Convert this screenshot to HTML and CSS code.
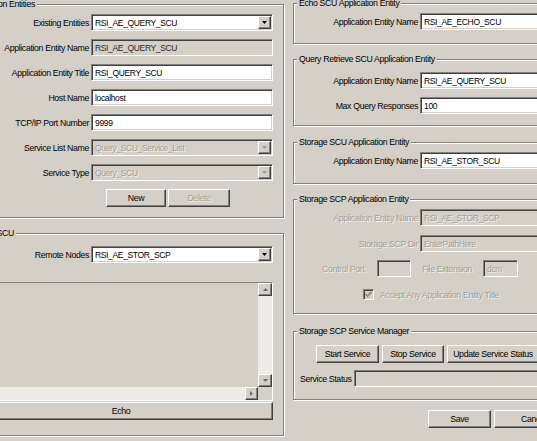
FILE: index.html
```html
<!DOCTYPE html>
<html>
<head>
<meta charset="utf-8">
<title>DICOM Settings</title>
<link rel="stylesheet" href="styles.css">
</head>
<body>
<div class="dialog">
  <div class="col-left">
    <fieldset class="gb gb-entities">
      <legend>Application Entities</legend>
      <div class="form form-left">
        <span class="lbl">Existing Entities</span>
        <div class="field combo"><span class="val">RSI_AE_QUERY_SCU</span><span class="drop raised"><svg width="5" height="3" viewBox="0 0 5 3"><polygon points="0,0 5,0 2.5,3" fill="#000"/></svg></span></div>
        <span class="lbl">Application Entity Name</span>
        <div class="field readonly"><span class="val">RSI_AE_QUERY_SCU</span></div>
        <span class="lbl">Application Entity Title</span>
        <div class="field"><span class="val">RSI_QUERY_SCU</span></div>
        <span class="lbl">Host Name</span>
        <div class="field"><span class="val">localhost</span></div>
        <span class="lbl">TCP/IP Port Number</span>
        <div class="field"><span class="val">9999</span></div>
        <span class="lbl">Service List Name</span>
        <div class="field combo disabled"><span class="val">Query_SCU_Service_List</span><span class="drop raised"><svg width="5" height="3" viewBox="0 0 5 3"><polygon points="0,0 5,0 2.5,3" fill="#a09d97"/></svg></span></div>
        <span class="lbl">Service Type</span>
        <div class="field combo disabled"><span class="val">Query_SCU</span><span class="drop raised"><svg width="5" height="3" viewBox="0 0 5 3"><polygon points="0,0 5,0 2.5,3" fill="#a09d97"/></svg></span></div>
      </div>
      <div class="btnrow btnrow-entities">
        <button class="btn raised btn-new">New</button>
        <button class="btn raised btn-delete dis-text">Delete</button>
      </div>
    </fieldset>

    <fieldset class="gb gb-echo">
      <legend>Echo SCU</legend>
      <div class="form form-left">
        <span class="lbl">Remote Nodes</span>
        <div class="field combo"><span class="val">RSI_AE_STOR_SCP</span><span class="drop raised"><svg width="5" height="3" viewBox="0 0 5 3"><polygon points="0,0 5,0 2.5,3" fill="#000"/></svg></span></div>
      </div>
      <div class="listbox">
        <div class="list-area"></div>
        <div class="vscroll">
          <span class="sbtn raised"><svg width="5" height="3" viewBox="0 0 5 3"><polygon points="0,3 5,3 2.5,0" fill="#6a6864"/></svg></span>
          <span class="track"></span>
          <span class="sbtn raised"><svg width="5" height="3" viewBox="0 0 5 3"><polygon points="0,0 5,0 2.5,3" fill="#6a6864"/></svg></span>
        </div>
        <div class="hscroll">
          <span class="sbtn raised"><svg width="3" height="5" viewBox="0 0 3 5"><polygon points="3,0 3,5 0,2.5" fill="#6a6864"/></svg></span>
          <span class="track"></span>
          <span class="sbtn raised"><svg width="3" height="5" viewBox="0 0 3 5"><polygon points="0,0 0,5 3,2.5" fill="#6a6864"/></svg></span>
        </div>
        <div class="corner"></div>
      </div>
      <button class="btn raised btn-echo">Echo</button>
    </fieldset>
  </div>

  <div class="col-right">
    <fieldset class="gb gb-r1">
      <legend>Echo SCU Application Entity</legend>
      <div class="form form-right">
        <span class="lbl">Application Entity Name</span>
        <div class="field"><span class="val">RSI_AE_ECHO_SCU</span></div>
      </div>
    </fieldset>

    <fieldset class="gb gb-r2">
      <legend>Query Retrieve SCU Application Entity</legend>
      <div class="form form-right">
        <span class="lbl">Application Entity Name</span>
        <div class="field"><span class="val">RSI_AE_QUERY_SCU</span></div>
        <span class="lbl">Max Query Responses</span>
        <div class="field"><span class="val">100</span></div>
      </div>
    </fieldset>

    <fieldset class="gb gb-r3">
      <legend>Storage SCU Application Entity</legend>
      <div class="form form-right">
        <span class="lbl">Application Entity Name</span>
        <div class="field"><span class="val">RSI_AE_STOR_SCU</span></div>
      </div>
    </fieldset>

    <fieldset class="gb gb-r4">
      <legend>Storage SCP Application Entity</legend>
      <div class="form form-right form-scp">
        <span class="lbl dis-text">Application Entity Name</span>
        <div class="field disabled"><span class="val">RSI_AE_STOR_SCP</span></div>
        <span class="lbl dis-text">Storage SCP Dir</span>
        <div class="field disabled"><span class="val">EnterPathHere</span></div>
      </div>
      <div class="port-row">
        <span class="lbl dis-text lbl-port">Control Port</span>
        <div class="field disabled f-port"></div>
        <span class="lbl dis-text lbl-ext">File Extension</span>
        <div class="field disabled f-ext"><span class="val">dcm</span></div>
      </div>
      <div class="check-row">
        <span class="checkbox"><svg width="7" height="7" viewBox="0 0 7 7"><polyline points="0.5,3 2.5,5 6.5,1" fill="none" stroke="#8a8782" stroke-width="1.6"/></svg></span>
        <span class="dis-text">Accept Any Application Entity Title</span>
      </div>
    </fieldset>

    <fieldset class="gb gb-r5">
      <legend>Storage SCP Service Manager</legend>
      <div class="btnrow btnrow-svc">
        <button class="btn raised btn-start">Start Service</button>
        <button class="btn raised btn-stop">Stop Service</button>
        <button class="btn raised btn-update">Update Service Status</button>
      </div>
      <div class="status-row">
        <span class="lbl">Service Status</span>
        <div class="field readonly f-status"></div>
      </div>
    </fieldset>

    <div class="btnrow btnrow-main">
      <button class="btn raised btn-save">Save</button>
      <button class="btn raised btn-cancel">Cancel</button>
    </div>
  </div>
</div>
</body>
</html>
```

FILE: styles.css
```css
html, body {
  margin: 0;
  padding: 0;
}
body {
  width: 537px;
  height: 441px;
  overflow: hidden;
  background: #d4d0c8;
  font-family: "Liberation Sans", Arial, sans-serif;
  font-size: 8.75px;
  letter-spacing: -0.35px;
  color: #000;
}
.dialog {
  display: flex;
  align-items: flex-start;
}
.col-left {
  flex: none;
  width: 324px;
  margin-left: -40px;
  margin-top: -1px;
  display: flex;
  flex-direction: column;
}
.col-right {
  flex: none;
  width: 280px;
  margin-left: 9px;
  margin-top: -2px;
  display: flex;
  flex-direction: column;
}

/* group boxes */
.gb {
  margin: 0;
  padding: 0;
  min-width: 0;
  border: 1px solid #808080;
  box-shadow: inset 1px 1px 0 #fff, 1px 1px 0 #fff;
}
.gb legend {
  padding: 0 2px;
  margin-left: 3px;
  height: 10px;
  line-height: 10px;
  background: #d4d0c8;
  white-space: nowrap;
}
.gb-entities { padding: 5px 10px 10px 0; }
.gb-entities legend { margin-left: 5px; }
.gb-echo { margin-top: 10px; padding: 8px 10px 15px 0; }
.gb-echo legend { margin-left: 13px; }

.gb-r1 { padding: 5px 0 13px 0; }
.gb-r2 { margin-top: 10px; padding: 8px 0 11px 0; }
.gb-r3 { margin-top: 11px; padding: 5px 0 14px 0; }
.gb-r4 { margin-top: 10px; padding: 5px 0 12px 0; }
.gb-r5 { margin-top: 12px; padding: 9px 0 12px 0; }

/* forms */
.form {
  display: grid;
  row-gap: 8px;
  column-gap: 2px;
  align-items: center;
}
.form-left { grid-template-columns: 128px 182px; }
.form-right { grid-template-columns: 124px 1fr; padding-right: 10px; }
.form-scp { row-gap: 9px; }
.lbl {
  text-align: right;
  white-space: nowrap;
  line-height: 12px;
}

/* sunken fields */
.field {
  box-sizing: border-box;
  height: 17px;
  border: 1px solid;
  border-color: #808080 #fff #fff #808080;
  box-shadow: inset 1px 1px 0 #404040, inset -1px -1px 0 #d4d0c8;
  background: #fff;
  display: flex;
  align-items: center;
  overflow: hidden;
  white-space: nowrap;
}
.field .val {
  padding-left: 3px;
  font-size: 8.5px;
  line-height: 12px;
}
.field.readonly { background: #d4d0c8; }
.field.readonly .val { color: #2a2a2a; }
.field.disabled { background: #d4d0c8; }
.combo .drop {
  margin-left: auto;
  margin-right: 1px;
  width: 13px;
  height: 13px;
  display: flex;
  align-items: center;
  justify-content: center;
  flex: none;
}

/* raised elements */
.raised {
  box-sizing: border-box;
  border: 1px solid;
  border-color: #fff #404040 #404040 #fff;
  box-shadow: inset -1px -1px 0 #808080;
  background: #d4d0c8;
}
.btn {
  font-family: inherit;
  font-size: 8.75px;
  letter-spacing: -0.35px;
  color: #000;
  height: 18px;
  padding: 0;
  margin: 0;
  line-height: 14px;
  white-space: nowrap;
}
.field.disabled .val,
.dis-text,
.btn.dis-text {
  color: #a29f99;
  text-shadow: 1px 1px 0 #f2f1ee;
}
.btnrow { display: flex; gap: 2px; }
.btnrow-entities { margin-top: 8px; padding-left: 145px; }
.btn-new { width: 60px; }
.btn-delete { width: 62px; }

/* list box */
.listbox {
  margin: 19px 0 0 8px;
  height: 119px;
  box-sizing: border-box;
  border: 1px solid;
  border-color: #808080 #fff #fff #808080;
  box-shadow: inset 1px 1px 0 #404040;
  display: grid;
  grid-template-columns: 1fr 14px;
  grid-template-rows: 1fr 13px;
}
.list-area { background: #d4d0c8; }
.vscroll { display: flex; flex-direction: column; }
.hscroll { display: flex; }
.track { flex: 1; background: #edece8; }
.sbtn {
  flex: none;
  width: 14px;
  height: 13px;
  display: flex;
  align-items: center;
  justify-content: center;
}
.hscroll .sbtn { width: 13px; height: 13px; }
.corner { background: #d4d0c8; }
.btn-echo {
  margin: 1px 0 0 8px;
  width: 304px;
}

/* storage scp rows */
.port-row {
  display: flex;
  align-items: center;
  margin-top: 8px;
  padding-left: 28px;
}
.lbl-port { width: 43px; text-align: left; }
.f-port { width: 34px; margin-left: 12px; }
.lbl-ext { width: 50px; text-align: left; margin-left: 11px; }
.f-ext { width: 35px; margin-left: 11px; }
.check-row {
  display: flex;
  align-items: center;
  gap: 6px;
  height: 13px;
  margin-top: 11px;
  padding-left: 69px;
  white-space: nowrap;
}
.checkbox {
  box-sizing: border-box;
  width: 11px;
  height: 11px;
  border: 1px solid;
  border-color: #808080 #fff #fff #808080;
  box-shadow: inset 1px 1px 0 #404040;
  background: #d4d0c8;
  display: flex;
  align-items: center;
  justify-content: center;
}

/* service manager */
.btnrow-svc { gap: 3px; padding-left: 22px; }
.btn-start { width: 63px; }
.btn-stop { width: 62px; }
.btn-update { width: 92px; }
.status-row {
  display: flex;
  align-items: center;
  gap: 2px;
  margin-top: 7px;
  padding-left: 6px;
}
.f-status { flex: 1; }

.btnrow-main { gap: 3px; margin-top: 10px; padding-left: 135px; }
.btn-save { width: 79px; }
.btn-cancel { width: 79px; flex: none; }
```
